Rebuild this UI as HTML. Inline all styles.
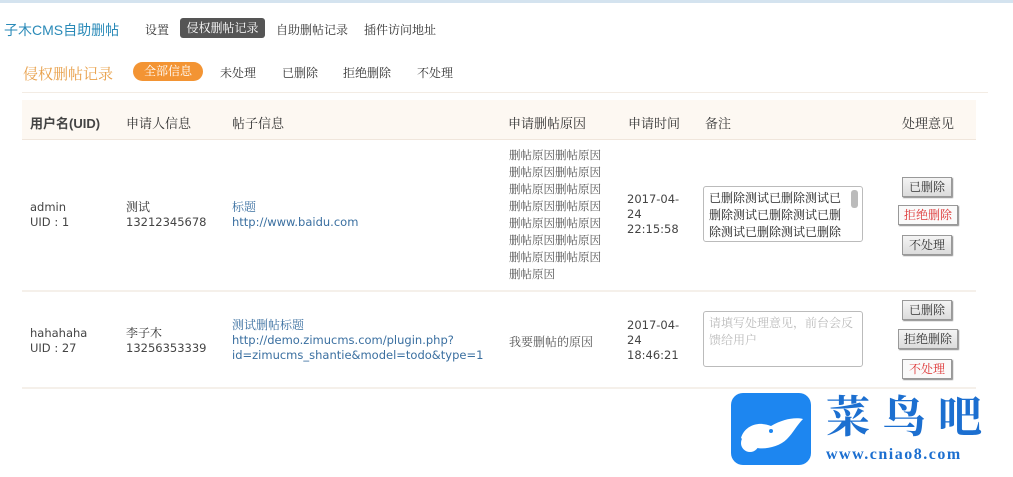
<!DOCTYPE html>
<html><head><meta charset="utf-8"><style>
*{margin:0;padding:0;box-sizing:border-box}
body{width:1013px;height:477px;background:#fff;font-family:"Liberation Sans","Noto Sans CJK SC",sans-serif;color:#333;position:relative;overflow:hidden;font-size:12px}
.a{position:absolute;white-space:nowrap}
.s{font-family:"Liberation Serif","Noto Serif CJK SC",serif}
.btn{position:absolute;border:1px solid #999;background:linear-gradient(#f4f4f4,#dcdcdc);font-family:"Liberation Serif","Noto Serif CJK SC",serif;font-size:12px;text-align:center;line-height:18px;height:20px;box-shadow:1px 1px 1px #888}
.ta{position:absolute;border:1px solid #bbb;border-radius:3px;background:#fff;font-family:"Liberation Serif","Noto Serif CJK SC",serif;font-size:12px;line-height:17px;padding:3px 5px;overflow:hidden;white-space:normal}
.mono{font-family:"DejaVu Sans","Liberation Sans",sans-serif;color:#444;font-size:11.5px}
</style></head><body>
<div style="position:absolute;left:0;top:0;width:1013px;height:3px;background:#d4e3ef"></div>
<div class="a" style="left:4px;top:20px;font-size:14px;color:#2a8ab8">子木CMS自助删帖</div>
<div class="a s" style="left:145px;top:21px;font-size:12px">设置</div>
<div class="a s" style="left:180px;top:18px;width:85px;height:20px;background:#555;color:#fff;border-radius:3px;font-size:12px;line-height:20px;text-align:center">侵权删帖记录</div>
<div class="a s" style="left:276px;top:21px;font-size:12px">自助删帖记录</div>
<div class="a s" style="left:364px;top:21px;font-size:12px">插件访问地址</div>
<div class="a s" style="left:23px;top:63px;font-size:15px;color:#e8a04a">侵权删帖记录</div>
<div class="a s" style="left:133px;top:62px;width:70px;height:19px;background:#f39433;color:#fff;border-radius:10px;font-size:12px;line-height:19px;text-align:center">全部信息</div>
<div class="a s" style="left:220px;top:64px">未处理</div>
<div class="a s" style="left:282px;top:64px">已删除</div>
<div class="a s" style="left:343px;top:64px">拒绝删除</div>
<div class="a s" style="left:417px;top:64px">不处理</div>
<div style="position:absolute;left:22px;top:92px;width:966px;height:1px;background:#f3ece4"></div>
<div style="position:absolute;left:22px;top:100px;width:954px;height:40px;background:#fdf8f2;border-bottom:1px solid #f0e6dc"></div>
<div class="a" style="left:30px;top:113px;font-size:13px;font-weight:bold;color:#444">用户名(UID)</div>
<div class="a s" style="left:126px;top:113px;font-size:13px">申请人信息</div>
<div class="a s" style="left:232px;top:113px;font-size:13px">帖子信息</div>
<div class="a s" style="left:508px;top:113px;font-size:13px">申请删帖原因</div>
<div class="a s" style="left:628px;top:113px;font-size:13px">申请时间</div>
<div class="a s" style="left:705px;top:113px;font-size:13px">备注</div>
<div class="a s" style="left:902px;top:113px;font-size:13px">处理意见</div>
<div style="position:absolute;left:22px;top:290px;width:954px;height:2px;background:#f5f0ea"></div>
<div style="position:absolute;left:22px;top:387px;width:954px;height:2px;background:#f5f0ea"></div>
<!-- row1 -->
<div class="a mono" style="left:30px;top:200px;line-height:15px">admin<br>UID : 1</div>
<div class="a" style="left:126px;top:200px;line-height:15px"><span class="s">测试</span><br><span class="mono">13212345678</span></div>
<div class="a" style="left:232px;top:200px;line-height:15px;color:#3a6fa0"><span class="s">标题</span><br><span class="mono" style="color:#3a6fa0">http://www.baidu.com</span></div>
<div class="a s" style="left:509px;top:148px;line-height:17px;font-size:11.5px;color:#555">删帖原因删帖原因<br>删帖原因删帖原因<br>删帖原因删帖原因<br>删帖原因删帖原因<br>删帖原因删帖原因<br>删帖原因删帖原因<br>删帖原因删帖原因<br>删帖原因</div>
<div class="a mono" style="left:627px;top:192px;line-height:15px">2017-04-<br>24<br>22:15:58</div>
<div class="ta" style="left:703px;top:186px;width:160px;height:56px;padding-right:14px;color:#222">已删除测试已删除测试已删除测试已删除测试已删除测试已删除测试已删除</div>
<div style="position:absolute;left:851px;top:190px;width:7px;height:18px;background:#bbb;border-radius:3px"></div>
<div class="btn" style="left:902px;top:177px;width:50px">已删除</div>
<div class="btn" style="left:898px;top:205px;width:60px;color:#d33;background:#fafafa">拒绝删除</div>
<div class="btn" style="left:902px;top:235px;width:50px">不处理</div>
<!-- row2 -->
<div class="a mono" style="left:30px;top:326px;line-height:15px">hahahaha<br>UID : 27</div>
<div class="a" style="left:126px;top:326px;line-height:15px"><span class="s">李子木</span><br><span class="mono">13256353339</span></div>
<div class="a" style="left:232px;top:318px;line-height:15px;color:#3a6fa0"><span class="s">测试删帖标题</span><br><span class="mono" style="color:#3a6fa0">http://demo.zimucms.com/plugin.php?<br>id=zimucms_shantie&amp;model=todo&amp;type=1</span></div>
<div class="a s" style="left:509px;top:333px;color:#555">我要删帖的原因</div>
<div class="a mono" style="left:627px;top:318px;line-height:15px">2017-04-<br>24<br>18:46:21</div>
<div class="ta" style="left:703px;top:311px;width:160px;height:56px;color:#bbb">请填写处理意见，前台会反馈给用户</div>
<div class="btn" style="left:902px;top:300px;width:50px">已删除</div>
<div class="btn" style="left:898px;top:329px;width:60px">拒绝删除</div>
<div class="btn" style="left:902px;top:359px;width:50px;color:#d33;background:#fafafa">不处理</div>
<!-- logo -->
<div style="position:absolute;left:731px;top:393px;width:80px;height:72px;background:#1d86f0;border-radius:12px"></div>
<svg style="position:absolute;left:731px;top:393px" width="80" height="72" viewBox="0 0 80 72"><path d="M10 45 C14 32 28 28 40 33 C52 26 64 24 72 26 C66 32 62 40 56 46 C46 56 26 58 18 52 Z" fill="#fff"/><circle cx="19" cy="50" r="9" fill="#fff"/><circle cx="40" cy="38" r="2" fill="#1d86f0"/></svg>
<div class="a s" style="left:826px;top:393px;font-size:44px;line-height:50px;color:#1c6fd0;font-weight:bold;letter-spacing:12px">菜鸟吧</div>
<div class="a s" style="left:826px;top:446px;font-size:16px;font-weight:bold;color:#1c6fd0;letter-spacing:1.5px">www.cniao8.com</div>
</body></html>
